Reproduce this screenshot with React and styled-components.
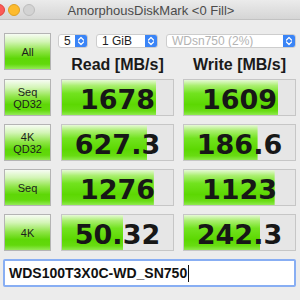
import React from 'react';
import styled, { createGlobalStyle } from 'styled-components';

const GlobalStyle = createGlobalStyle`
	html, body {
		margin: 0;
		padding: 0;
		width: 300px;
		height: 300px;
		overflow: hidden;
		background: #ececec;
		font-family: "Liberation Sans", Arial, sans-serif;
	}
`;

const Window = styled.div`
	width: 300px;
	height: 300px;
	background: #ececec;
	overflow: hidden;
`;

const TitleBar = styled.div`
	height: 20px;
	display: flex;
	align-items: center;
	background: linear-gradient(to bottom, #ebebeb, #d5d5d5);
	border-bottom: 1px solid #c2c2c2;
	box-sizing: border-box;
`;

const Lights = styled.div`
	display: flex;
	gap: 3px;
	margin-left: -7px;
`;

const Light = styled.span`
	width: 12px;
	height: 12px;
	border-radius: 50%;
	box-sizing: border-box;
	background: ${p => p.color};
	border: 1px solid ${p => p.edge};
`;

const Title = styled.div`
	flex: 1;
	text-align: center;
	font-size: 13px;
	color: #4b4b4b;
	margin-right: 33px;
	margin-top: 1px;
`;

const Body = styled.div`
	display: grid;
	grid-template-columns: 48px 113px 113px;
	grid-template-rows: 15px 15px repeat(4, 37px) 28px;
	column-gap: 9px;
	row-gap: 8px;
	padding: 13px 4px 0 4px;
`;

const TestButton = styled.div`
	width: 47px;
	height: 37px;
	box-sizing: border-box;
	border: 1px solid #b4b4b4;
	background: linear-gradient(to bottom, #f7fcf4 0%, #d3f5b6 22%, #8fe548 48%, #5ed707 70%, #62d90c 86%, #94ea58 100%);
	display: flex;
	flex-direction: column;
	align-items: center;
	justify-content: center;
	font-size: 11px;
	line-height: 12px;
	color: #1c1c1c;
	text-align: center;
	${p => p.span && `grid-row: 1 / span 2;`}
`;

const SelectRow = styled.div`
	grid-column: 2 / span 2;
	display: flex;
	gap: 8px;
	margin-left: -3px;
	margin-top: 1px;
	height: 14px;
`;

const SelectBox = styled.div`
	width: ${p => p.w}px;
	height: 14px;
	box-sizing: border-box;
	display: flex;
	background: #fff;
	border: 1px solid #cdcdcd;
	border-radius: 3px;
	overflow: hidden;
`;

const SelectText = styled.div`
	flex: 1;
	font-size: 12px;
	line-height: 12px;
	padding-left: 5px;
	color: ${p => (p.disabled ? '#b3b3b3' : '#1e1e1e')};
	white-space: nowrap;
`;

const Stepper = styled.div`
	width: 12px;
	background: #3a84f6;
	display: flex;
	align-items: center;
	justify-content: center;
`;

const Header = styled.div`
	font-size: 16px;
	font-weight: bold;
	line-height: 15px;
	height: 15px;
	margin-top: 1px;
	color: #1a1a1a;
	text-align: center;
	white-space: nowrap;
`;

const Cell = styled.div`
	height: 37px;
	box-sizing: border-box;
	padding-top: 3px;
	border: 1px solid #c6c6c6;
	background-color: #e6e6e6;
	background-image: linear-gradient(to bottom, #e6f9d6 0%, #aaef70 16%, #72e31f 38%, #5cd802 70%, #68dc12 88%, #8fea4f 100%);
	background-repeat: no-repeat;
	display: flex;
	align-items: center;
	justify-content: center;
	font-family: "DejaVu Sans", "Liberation Sans", sans-serif;
	font-weight: bold;
	font-size: 27px;
	color: #171717;
`;

const NameField = styled.div`
	grid-column: 1 / span 3;
	margin-left: -1px;
	height: 28px;
	box-sizing: border-box;
	border: 2px solid #88aef3;
	border-radius: 2px;
	background: #fff;
	display: flex;
	align-items: center;
	padding-left: 4px;
	font-size: 14px;
	font-weight: bold;
	color: #111;
`;

const Caret = styled.span`
	display: inline-block;
	width: 1px;
	height: 17px;
	background: #111;
	margin-left: 1px;
`;

const Chevrons = () => (
	<svg width="8" height="10" viewBox="0 0 8 10">
		<path d="M1.5 4 L4 1.5 L6.5 4 M1.5 6 L4 8.5 L6.5 6" stroke="#fff" strokeWidth="1.2" fill="none" strokeLinecap="round" strokeLinejoin="round" />
	</svg>
);

const Select = ({ w, text, disabled }) => (
	<SelectBox w={w}>
		<SelectText disabled={disabled}>{text}</SelectText>
		<Stepper>
			<Chevrons />
		</Stepper>
	</SelectBox>
);

// bar length is logarithmic, like the app
const fill = v => Math.min(100, ((Math.log10(v) + 1.09) / 5.07) * 100);

const rows = [
	{ label: ['Seq', 'QD32'], read: '1678', write: '1609' },
	{ label: ['4K', 'QD32'], read: '627.3', write: '186.6' },
	{ label: ['Seq'], read: '1276', write: '1123' },
	{ label: ['4K'], read: '50.32', write: '242.3' },
];

const App = () => {
	return (
		<Window>
			<GlobalStyle />
			<TitleBar>
				<Lights>
					<Light color="#fc5b57" edge="#e0443e" />
					<Light color="#fdbb2e" edge="#dea123" />
					<Light color="#d3d3d3" edge="#bdbdbd" />
				</Lights>
				<Title>AmorphousDiskMark &lt;0 Fill&gt;</Title>
			</TitleBar>
			<Body>
				<TestButton span>All</TestButton>
				<SelectRow>
					<Select w={30} text="5" />
					<Select w={62} text="1 GiB" />
					<Select w={130} text="WDsn750 (2%)" disabled />
				</SelectRow>
				<Header>Read [MB/s]</Header>
				<Header>Write [MB/s]</Header>
				{rows.map(r => (
					<React.Fragment key={r.label.join() + r.read}>
						<TestButton>
							{r.label.map(l => (
								<span key={l}>{l}</span>
							))}
						</TestButton>
						<Cell style={{ backgroundSize: `${fill(parseFloat(r.read))}% 100%` }}>{r.read}</Cell>
						<Cell style={{ backgroundSize: `${fill(parseFloat(r.write))}% 100%` }}>{r.write}</Cell>
					</React.Fragment>
				))}
				<NameField>
					WDS100T3X0C-WD_SN750<Caret />
				</NameField>
			</Body>
		</Window>
	);
};

export default App;
